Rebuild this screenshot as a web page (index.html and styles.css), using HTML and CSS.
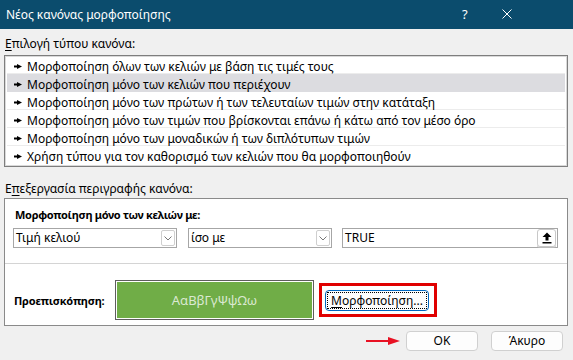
FILE: index.html
```html
<!DOCTYPE html>
<html lang="el">
<head>
<meta charset="utf-8">
<title>Νέος κανόνας μορφοποίησης</title>
<link rel="stylesheet" href="styles.css">
</head>
<body>
<div class="dialog">
  <div class="titlebar">
    <span class="title">Νέος κανόνας μορφοποίησης</span>
    <span class="help">?</span>
    <span class="close"><svg width="10" height="10" viewBox="0 0 10 10"><path d="M0.5 0.5L9.5 9.5M9.5 0.5L0.5 9.5" stroke="#fff" stroke-width="1"/></svg></span>
  </div>
  <div class="content">
    <div class="label label-type"><u>Ε</u>πιλογή τύπου κανόνα:</div>
    <ul class="rule-list">
      <li class="rule"><svg class="bullet" width="8" height="5" viewBox="0 0 8 5"><rect x="0" y="1.5" width="4" height="2" fill="#000"/><path d="M3 0L8 2.5L3 5Z" fill="#000"/></svg>Μορφοποίηση όλων των κελιών με βάση τις τιμές τους</li>
      <li class="rule rule-selected"><svg class="bullet" width="8" height="5" viewBox="0 0 8 5"><rect x="0" y="1.5" width="4" height="2" fill="#000"/><path d="M3 0L8 2.5L3 5Z" fill="#000"/></svg>Μορφοποίηση μόνο των κελιών που περιέχουν</li>
      <li class="rule"><svg class="bullet" width="8" height="5" viewBox="0 0 8 5"><rect x="0" y="1.5" width="4" height="2" fill="#000"/><path d="M3 0L8 2.5L3 5Z" fill="#000"/></svg>Μορφοποίηση μόνο των πρώτων ή των τελευταίων τιμών στην κατάταξη</li>
      <li class="rule"><svg class="bullet" width="8" height="5" viewBox="0 0 8 5"><rect x="0" y="1.5" width="4" height="2" fill="#000"/><path d="M3 0L8 2.5L3 5Z" fill="#000"/></svg>Μορφοποίηση μόνο των τιμών που βρίσκονται επάνω ή κάτω από τον μέσο όρο</li>
      <li class="rule"><svg class="bullet" width="8" height="5" viewBox="0 0 8 5"><rect x="0" y="1.5" width="4" height="2" fill="#000"/><path d="M3 0L8 2.5L3 5Z" fill="#000"/></svg>Μορφοποίηση μόνο των μοναδικών ή των διπλότυπων τιμών</li>
      <li class="rule rule-last"><svg class="bullet" width="8" height="5" viewBox="0 0 8 5"><rect x="0" y="1.5" width="4" height="2" fill="#000"/><path d="M3 0L8 2.5L3 5Z" fill="#000"/></svg>Χρήση τύπου για τον καθορισμό των κελιών που θα μορφοποιηθούν</li>
    </ul>
    <div class="label label-edit">Ε<u>π</u>εξεργασία περιγραφής κανόνα:</div>
    <div class="edit-box">
      <div class="criteria">
        <div class="criteria-title">Μορφοποίηση μόνο των κελιών με:</div>
        <div class="fields">
          <div class="combo combo-1">
            <span class="combo-text">Τιμή κελιού</span>
            <span class="combo-btn"><svg width="8" height="5" viewBox="0 0 8 5"><path d="M0.5 0.5L4 4L7.5 0.5" fill="none" stroke="#777" stroke-width="1"/></svg></span>
          </div>
          <div class="combo combo-2">
            <span class="combo-text">ίσο με</span>
            <span class="combo-btn"><svg width="8" height="5" viewBox="0 0 8 5"><path d="M0.5 0.5L4 4L7.5 0.5" fill="none" stroke="#777" stroke-width="1"/></svg></span>
          </div>
          <div class="textbox">
            <span class="combo-text textbox-text">TRUE</span>
            <span class="ref-btn"><svg width="10" height="12" viewBox="0 0 10 12"><path d="M5 0.5L9.5 5H6.5V8.5H3.5V5H0.5Z" fill="#000"/><rect x="0.5" y="10" width="9" height="1.5" fill="#000"/></svg></span>
          </div>
        </div>
      </div>
      <div class="preview-row">
        <div class="preview-label">Προεπισκόπηση:</div>
        <div class="swatch"><div class="swatch-inner">AαBβΓγΨψΩω</div></div>
        <div class="highlight">
          <button class="btn btn-format"><span class="focus"><u>Μ</u>ορφοποίηση...</span></button>
        </div>
      </div>
    </div>
    <div class="actions">
      <svg class="pointer" width="34" height="8" viewBox="0 0 34 8"><rect x="0" y="3" width="24" height="2" fill="#e81123"/><path d="M22 0L34 4L22 8Z" fill="#e81123"/></svg>
      <button class="btn btn-ok">OK</button>
      <button class="btn btn-cancel">Άκυρο</button>
    </div>
  </div>
</div>
</body>
</html>
```

FILE: styles.css
```css
html, body {
  margin: 0;
  padding: 0;
}
body {
  width: 573px;
  height: 360px;
  overflow: hidden;
  background: #f0f0f0;
  font-family: "Noto Sans", "Open Sans", sans-serif;
  font-size: 12px;
  color: #000;
}
.dialog {
  display: flex;
  flex-direction: column;
  height: 360px;
}
.titlebar {
  height: 29px;
  background: #0b4c6d;
  color: #fff;
  display: flex;
  align-items: center;
  padding-left: 6px;
  box-sizing: border-box;
}
.title {
  flex: 1;
  font-size: 12px;
  line-height: 16px;
}
.help {
  font-size: 13px;
  width: 40px;
  margin-top: -1px;
}
.close {
  width: 71px;
  display: flex;
  margin-top: -1px;
}
.content {
  padding: 0 5px 0 4px;
  display: flex;
  flex-direction: column;
}
.label {
  line-height: 16px;
  height: 16px;
  padding-left: 1px;
}
.label-type { margin-top: 7px; }
.label-edit { margin-top: 14px; }
u { text-decoration-thickness: 1px; text-underline-offset: 2px; }
.rule-list {
  list-style: none;
  margin: 3px 0 0 0;
  padding: 0 2px 2px 2px;
  background: #fff;
  border: 1px solid #7e7e7e;
  box-shadow: inset 0 0 0 1px #d9d9d9;
}
.rule {
  height: 18px;
  box-sizing: border-box;
  border-bottom: 1px solid #ececec;
  display: flex;
  align-items: center;
  padding-left: 7px;
  padding-top: 3px;
  white-space: nowrap;
}
.rule-last { border-bottom: none; }
.rule-selected { background: #dcdce0; border-bottom-color: #dcdce0; }
.bullet { margin-right: 5px; flex: none; }
.edit-box {
  margin-top: 1px;
  background: #fff;
  border: 1px solid #8a8a8a;
}
.criteria {
  padding: 8px 9px 15px 8px;
  border-bottom: 1px solid #d4d4d4;
}
.criteria-title {
  font-weight: bold;
  font-size: 11px;
  letter-spacing: -0.3px;
  line-height: 16px;
  padding-left: 2px;
}
.fields {
  display: flex;
  margin-top: 5px;
  height: 20px;
}
.combo, .textbox {
  box-sizing: border-box;
  height: 20px;
  border: 1px solid #a6a6a6;
  display: flex;
  align-items: center;
  background: #fff;
}
.combo-1 { width: 164px; }
.combo-2 { width: 144px; margin-left: 11px; }
.textbox { flex: 1; margin-left: 10px; }
.combo-text {
  flex: 1;
  padding-left: 2px;
  line-height: 16px;
}
.combo-btn {
  width: 14px;
  height: 16px;
  box-sizing: border-box;
  border: 1px solid #cfcfcf;
  border-radius: 2px;
  display: flex;
  align-items: center;
  justify-content: center;
  margin-right: 1px;
}
.ref-btn {
  width: 19px;
  height: 18px;
  box-sizing: border-box;
  border: 1px solid #c8c8c8;
  border-radius: 3px;
  display: flex;
  align-items: center;
  justify-content: center;
  margin-right: 1px;
  box-shadow: 0 1px 0 #bbb;
}
.textbox-text { color: #000; }
.preview-row {
  display: flex;
  align-items: center;
  padding: 16px 0 5px 9px;
}
.preview-label {
  width: 101px;
  font-weight: bold;
  font-size: 11px;
  letter-spacing: -0.2px;
}
.swatch {
  width: 199px;
  height: 40px;
  box-sizing: border-box;
  border: 1px solid #5e5e5e;
  padding: 1px;
  background: #fff;
}
.swatch-inner {
  height: 100%;
  background: #70ad47;
  color: #dbe9d2;
  font-size: 13px;
  display: flex;
  align-items: center;
  justify-content: center;
}
.highlight {
  margin-left: 5px;
  border: 3px solid #e00000;
  padding: 4px 5px 3px 3px;
  display: flex;
}
.btn {
  font-family: "Noto Sans", "Open Sans", sans-serif;
  font-size: 12px;
  color: #000;
  background: #fdfdfd;
  border: 1px solid #d0d0d0;
  border-radius: 4px;
  padding: 0;
  margin: 0;
  box-sizing: border-box;
}
.btn-format {
  width: 104px;
  height: 21px;
  border: 1px solid #0067c0;
  padding: 1px;
  display: flex;
}
.focus {
  flex: 1;
  border: 1px dotted #000;
  display: flex;
  align-items: center;
  justify-content: center;
  line-height: 15px;
}
.actions {
  display: flex;
  align-items: center;
  justify-content: flex-end;
  margin-top: 5px;
  padding-right: 5px;
}
.pointer { margin-right: 6px; }
.btn-ok, .btn-cancel {
  width: 72px;
  height: 20px;
  line-height: 18px;
}
.btn-cancel { margin-left: 13px; }
```
